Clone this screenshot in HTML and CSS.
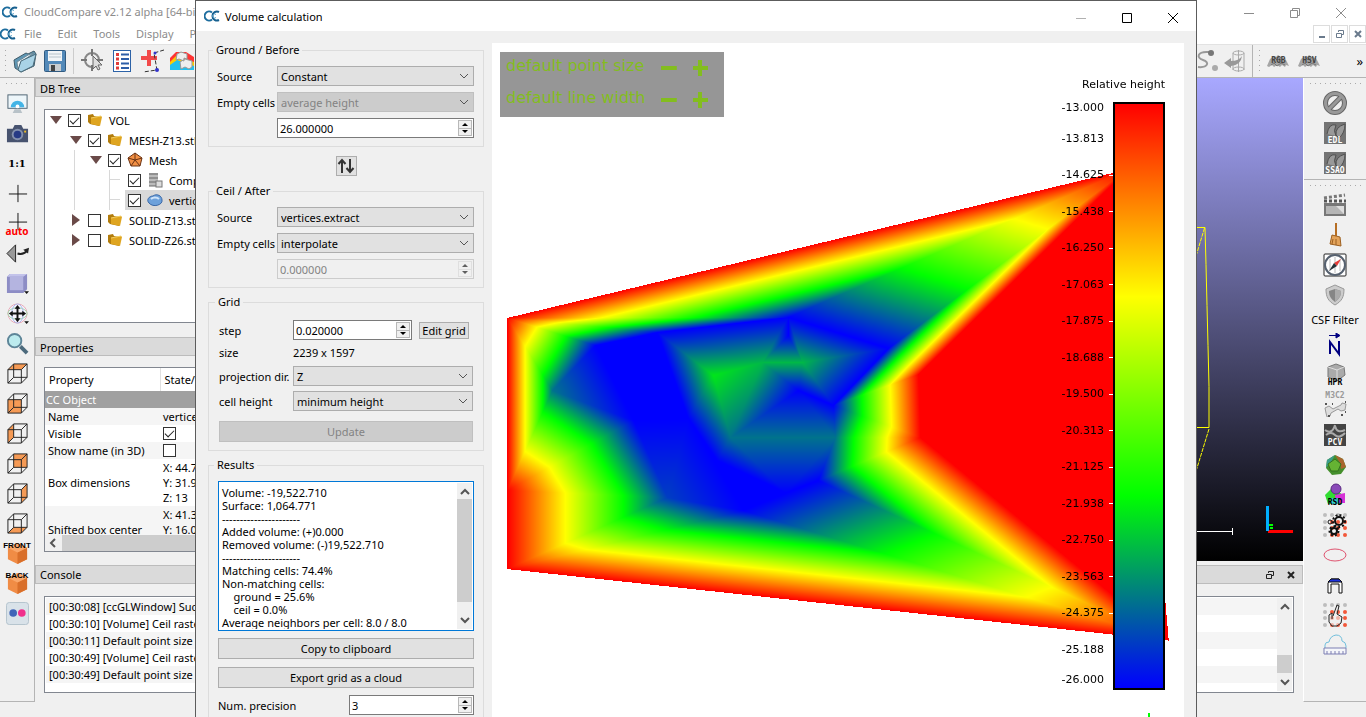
FILE: index.html
```html
<!DOCTYPE html>
<html lang="en">

<head>
    <meta charset="UTF-8">
    <meta name="viewport" content="width=device-width, initial-scale=1.0">
    <title>CloudCompare - Volume calculation</title>
    <link rel="stylesheet" href="styles.css">
</head>

<body>
    <!-- Shared icon shapes -->
    <svg class="sprite" aria-hidden="true">
        <symbol id="logo" viewBox="0 0 16 16">
            <path d="M8 4.500A4.500 4.500 0 1 0 8 11.500" fill="none" stroke="#1d6d9e" stroke-width="2" />
            <path d="M15 4A4.500 4.500 0 1 0 15 12" fill="none" stroke="#17608f" stroke-width="2" />
            <path d="M12 6.500A2 2 0 1 0 12 9.500" fill="none" stroke="#5da3c9" />
        </symbol>
        <symbol id="folder" viewBox="0 0 16 16">
            <path d="M1 3l5-1 1 2 5 1v9l-9-2-2-2z" fill="#b27c0c" />
            <path d="M4 6l10-2 1 1-2 9-9-2z" fill="#dfa520" />
            <path d="M4 6l10-2" stroke="#f4cf62" />
        </symbol>
        <symbol id="wire" viewBox="0 0 24 24">
            <path d="M2 8h14v14H2zM2 8l6-6h14v14l-6 6M16 8l6-6M8 2v14h14M8 16l-6 6" fill="none" stroke="#222" />
        </symbol>
        <symbol id="block" viewBox="0 0 24 24">
            <path d="M12 1l10 5v12l-10 5-10-5V6z" fill="#f08c45" />
            <path d="M12 11l10-5v12l-10 5z" fill="#d96f2a" />
            <path d="M12 1l10 5-10 5L2 6z" fill="#f9a86c" />
        </symbol>
        <symbol id="dots" viewBox="0 0 24 24">
            <g fill="#bdbdbd">
                <circle cx="2" cy="2" r="2" /><circle cx="9" cy="2" r="2" /><circle cx="15" cy="2" r="2" /><circle cx="22" cy="2" r="2" />
                <circle cx="2" cy="9" r="2" /><circle cx="2" cy="15" r="2" /><circle cx="2" cy="22" r="2" />
            </g>
            <g fill="#f2583a">
                <circle cx="9" cy="9" r="2" /><circle cx="15" cy="9" r="2" /><circle cx="22" cy="9" r="2" />
                <circle cx="9" cy="15" r="2" /><circle cx="15" cy="15" r="2" /><circle cx="22" cy="15" r="2" />
                <circle cx="9" cy="22" r="2" /><circle cx="15" cy="22" r="2" /><circle cx="22" cy="22" r="2" />
            </g>
        </symbol>
        <symbol id="sheep" viewBox="0 0 24 16">
            <path d="M1 13l3-7 4-3 2 1 2-2 3 2 4 1 4 8-3-1-1 2-3-2-2 2-3-2-3 2-2-2-3 2z" fill="#a5a5a5" />
            <path d="M8 4l3 3 5-3M5 12l3-2 3 3 4-3 4 2" stroke="#777" fill="none" />
        </symbol>
    </svg>

    <div class="main-window">
        <header class="title-bar">
            <svg class="logo"><use href="#logo" /></svg>
            <span class="title-text">CloudCompare v2.12 alpha [64-bit]</span>
            <div class="window-buttons">
                <button aria-label="Minimize"><svg viewBox="0 0 12 12"><path d="M1 6.500h10" /></svg></button>
                <button aria-label="Restore"><svg viewBox="0 0 12 12"><path d="M1.500 3.500h7v7h-7zM3.500 3.500v-2h7v7h-2" /></svg></button>
                <button aria-label="Close"><svg viewBox="0 0 12 12"><path d="M1 1l10 10M11 1L1 11" /></svg></button>
            </div>
        </header>

        <nav class="menu-bar">
            <svg class="logo"><use href="#logo" /></svg>
            <button>File</button>
            <button>Edit</button>
            <button>Tools</button>
            <button>Display</button>
            <button>Plugins</button>
            <div class="mdi-buttons">
                <button aria-label="Minimize view"><svg viewBox="0 0 10 10"><path d="M2 8h6" /></svg></button>
                <button aria-label="Restore view"><svg viewBox="0 0 10 10"><path d="M1.500 4.500h5v4h-5zM3.500 3V1.500h5v4H7" stroke-width="1" /></svg></button>
                <button aria-label="Close view"><svg viewBox="0 0 10 10"><path d="M2 2l6 6M8 2L2 8" /></svg></button>
            </div>
        </nav>

        <div class="toolbar">
            <div class="toolbar-group">
                <span class="grip"></span>
                <button class="tool" aria-label="Open"><svg viewBox="0 0 24 24"><path d="M1 11L13 4l2 1 6-3 2 3-2 12-13 6-6-4z" fill="#5f97b5" stroke="#3e5a68" /><path d="M4 13L15 6l6-2-13 9-3 8z" fill="#eef4f7" stroke="#6f8a97" /><path d="M5 21l3-9 15-7-3 12-12 6z" fill="#a9d3e6" stroke="#4b6b7a" /></svg></button>
                <button class="tool" aria-label="Save"><svg viewBox="0 0 24 24"><rect x="1.500" y="1.500" width="21" height="21" rx="1" fill="#5289b9" stroke="#315b81" /><rect x="5" y="2" width="14" height="10" fill="#f2f5f7" /><path d="M6 5h12M6 8h12" stroke="#b8c4cc" /><rect x="6" y="15" width="12" height="7" fill="#c9cdd0" /><rect x="8" y="16" width="4" height="6" fill="#444" /></svg></button>
                <span class="tool-separator"></span>
                <button class="tool" aria-label="Pick center"><svg viewBox="0 0 24 24"><circle cx="12" cy="11" r="7" fill="none" stroke="#888" stroke-width="2" /><path d="M12 0v7M12 16v6M1 11h6M17 11h6" stroke="#777" stroke-width="2" /><path d="M13 7v13l3-3 2 4 2-1-2-4h4z" fill="#ddd" stroke="#666" /></svg></button>
                <button class="tool" aria-label="Properties list"><svg viewBox="0 0 24 24"><rect x="3.500" y="1.500" width="17" height="21" fill="#fff" stroke="#2c62a7" stroke-width="1" /><path d="M11 5.500h8M11 10h8M11 14.500h8M11 19h8" stroke="#2d5ea8" stroke-width="2" /><path d="M6 5.500h3M6 10h3M6 14.500h3M6 19h3" stroke="#e03b3b" stroke-width="3" /></svg></button>
                <button class="tool" aria-label="Point picking"><svg viewBox="0 0 24 24"><path d="M9 1v16M1 9h16" stroke="#f24a4a" stroke-width="4" /><path d="M24 1l-10 3 3 17-14 2" fill="none" stroke="#333" stroke-dasharray="4 2" /><circle cx="15" cy="4" r="1.500" fill="#33c" /><circle cx="17" cy="21" r="2" fill="#33c" /></svg></button>
                <button class="tool" aria-label="Clone"><svg viewBox="0 0 24 24"><path d="M0 18V9l6-6h10l8 5v12H0z" fill="#f33" /><path d="M0 19v-6l6-6 18 6v6z" fill="#fc0" /><path d="M0 21v-5l7-5 17 6v4z" fill="#22c0ee" /><path d="M7 5l4-2 6 2v5l-3-1v3l-5-2-3 1zM10 13l5-3 7 2v6l-3 2-4-2-4 2z" fill="#eee" stroke="#999" /></svg></button>
            </div>
            <div class="toolbar-group toolbar-right">
                <button class="tool" aria-label="Trace polyline"><svg viewBox="0 0 24 24"><path d="M15 3C3 2 2 9 9 11s5 8-5 7" fill="none" stroke="#999" stroke-width="2" /><circle cx="17" cy="4" r="3" fill="#777" /><circle cx="21" cy="19" r="3" fill="#aaa" /></svg></button>
                <button class="tool" aria-label="Unroll"><svg viewBox="0 0 24 24"><path d="M10 4v17M21 4v17M15.500 1v22" stroke="#aaa" /><ellipse cx="15.500" cy="4" rx="5.500" ry="2" fill="none" stroke="#aaa" /><ellipse cx="15.500" cy="20" rx="5.500" ry="2" fill="none" stroke="#aaa" /><path d="M1 14l7-5v3q8 0 11-5-1 9-11 10v2z" fill="#999" /></svg></button>
                <span class="bar-edge"></span>
                <span class="grip"></span>
                <button class="tool sheep-tool">
                    <svg viewBox="0 0 24 16"><use href="#sheep" /></svg><span>RGB</span>
                </button>
                <button class="tool sheep-tool">
                    <svg viewBox="0 0 24 16"><use href="#sheep" /></svg><span>HSV</span>
                </button>
                <button class="more" aria-label="More tools">»</button>
            </div>
        </div>

        <div class="workspace">
            <aside class="side-bar side-left">
                <span class="grip grip-flat"></span>
                <button class="side-tool" aria-label="Display settings"><svg viewBox="0 0 24 24"><rect x="2" y="3" width="20" height="14" fill="#edf6fa" stroke="#4c6271" stroke-width="1" /><path d="M5 16a7 7 0 0 1 14 0z" fill="#43b4e6" /><circle cx="12" cy="15" r="2" fill="#fff" /><path d="M9 18h6l2 4H7z" fill="#b8c2c8" /></svg></button>
                <button class="side-tool" aria-label="Render to file"><svg viewBox="0 0 24 24"><path d="M1 7h6l2-4h7l2 4h5v14H1z" fill="#47536f" /><circle cx="12" cy="13" r="6" fill="#8390ad" /><circle cx="12" cy="13" r="4" fill="#263a85" /><rect x="19" y="9" width="2" height="2" fill="#f3bf27" /></svg></button>
                <button class="side-tool ratio">1:1</button>
                <button class="side-tool" aria-label="Pick rotation center"><svg viewBox="0 0 24 24"><path d="M12.500 3v18M3 12.500h19" stroke="#111" /></svg></button>
                <button class="side-tool auto-tool"><svg viewBox="0 0 24 24"><path d="M12.500 1v18M3 10.500h19" stroke="#111" /></svg><span>auto</span></button>
                <button class="side-tool" aria-label="Rotate"><svg viewBox="0 0 24 24"><path d="M10 3v18L1 12z" fill="#999" stroke="#222" /><path d="M12 12q6 2 10-3" fill="none" stroke="#222" stroke-width="2" /><path d="M18 8l6-2-1 6z" fill="#222" /></svg></button>
                <button class="side-tool" aria-label="Projection"><svg viewBox="0 0 24 24"><path d="M1 5l3-3h18v16l-4 4H1z" fill="#8d8dc5" /><path d="M1 5l3-3h18l-4 3z" fill="#c3c3ea" /><rect x="4" y="5" width="14" height="14" fill="#b4b4e0" /><path d="M19 20h5l-2.500 3z" fill="#111" /></svg></button>
                <button class="side-tool" aria-label="Pivot"><svg viewBox="0 0 24 24"><circle cx="12" cy="12" r="10" fill="#f5f2fb" stroke="#e8a9b5" /><ellipse cx="12" cy="12" rx="10" ry="6" fill="none" stroke="#9fd8a8" /><ellipse cx="12" cy="12" rx="6" ry="10" fill="none" stroke="#a8b8ec" /><path d="M12 6v12M6 12h12" stroke="#111" stroke-width="2" /><path d="M12 3l3 4H9zM12 21l3-4H9zM3 12l4-3v6zM21 12l-4-3v6zM19 20h5l-2.500 3z" fill="#111" /></svg></button>
                <button class="side-tool" aria-label="Zoom"><svg viewBox="0 0 24 24"><path d="M15 15l7 7" stroke="#4c6a7c" stroke-width="4" /><circle cx="9" cy="9" r="7" fill="#bcebee" stroke="#5d8598" stroke-width="2" /></svg></button>
                <button class="side-tool cube" aria-label="Top view"><svg viewBox="0 0 24 24"><path d="M2 8l6-6h14l-6 6z" fill="#f59a55" /><use href="#wire" /></svg></button>
                <button class="side-tool cube" aria-label="Front view"><svg viewBox="0 0 24 24"><path d="M2 8h14v14H2z" fill="#f59a55" /><use href="#wire" /></svg></button>
                <button class="side-tool cube" aria-label="Left view"><svg viewBox="0 0 24 24"><path d="M2 8l6-6v14l-6 6z" fill="#f59a55" /><use href="#wire" /></svg></button>
                <button class="side-tool cube" aria-label="Back side view"><svg viewBox="0 0 24 24"><path d="M8 2h14v14H8z" fill="#f59a55" /><use href="#wire" /></svg></button>
                <button class="side-tool cube" aria-label="Right view"><svg viewBox="0 0 24 24"><path d="M16 8l6-6v14l-6 6z" fill="#f59a55" /><use href="#wire" /></svg></button>
                <button class="side-tool cube" aria-label="Bottom view"><svg viewBox="0 0 24 24"><path d="M2 22l6-6h14l-6 6z" fill="#f59a55" /><use href="#wire" /></svg></button>
                <button class="side-tool block-tool"><svg viewBox="0 0 24 24"><use href="#block" /></svg><span>FRONT</span></button>
                <button class="side-tool block-tool"><svg viewBox="0 0 24 24"><use href="#block" /></svg><span>BACK</span></button>
                <button class="side-tool" aria-label="Stereo"><svg viewBox="0 0 24 24"><rect x="0.500" y="0.500" width="23" height="23" rx="3" fill="#d9e2e9" stroke="#b3c2cd" /><circle cx="7.500" cy="11.500" r="4" fill="#3f64b8" /><circle cx="16.500" cy="11.500" r="4" fill="#f0308c" /></svg></button>
            </aside>

            <div class="center">
                <div class="upper">
                    <div class="docks">
                        <h2 class="dock-title">DB Tree</h2>
                        <ul class="tree">
                            <li class="tree-row level-0"><span class="arrow open"></span><input type="checkbox" id="vol" checked><svg class="node-icon"><use href="#folder" /></svg><label for="vol">VOL</label></li>
                            <li class="tree-row level-1"><span class="arrow open"></span><input type="checkbox" id="mesh13" checked><svg class="node-icon"><use href="#folder" /></svg><label for="mesh13">MESH-Z13.stl</label></li>
                            <li class="tree-row level-2"><span class="arrow open"></span><input type="checkbox" id="mesh" checked><svg class="node-icon" viewBox="0 0 16 16"><path d="M8 1l7 5-2 8H4L1 6z" fill="#f29044" stroke="#693213" /><path d="M8 8V1M8 8l7-2M8 8l5 6M8 8l-4 6M8 8L1 6" stroke="#693213" /></svg><label for="mesh">Mesh</label></li>
                            <li class="tree-row level-3"><span class="arrow branch"></span><input type="checkbox" id="comp" checked><svg class="node-icon" viewBox="0 0 16 16"><path d="M2 1h9v13H2z" fill="#bbb" /><path d="M2 2h9M2 6h9M2 10h9M2 14h7" stroke="#666" /><rect x="9" y="9" width="6" height="6" fill="#ddd" stroke="#777" /></svg><label for="comp">Component</label></li>
                            <li class="tree-row level-3 selected"><span class="arrow branch"></span><input type="checkbox" id="vertices" checked><svg class="node-icon" viewBox="0 0 16 16"><path d="M2 11c-3-3 0-7 4-7 4-3 9 0 9 4 1 5-9 8-13 3z" fill="#6da1db" stroke="#3a67a5" /><path d="M4 7c2-2 6-2 8 0" stroke="#cfe4fa" fill="none" stroke-width="2" /></svg><label for="vertices">vertices</label></li>
                            <li class="tree-row level-1"><span class="arrow closed"></span><input type="checkbox" id="solid13"><svg class="node-icon"><use href="#folder" /></svg><label for="solid13">SOLID-Z13.stl</label></li>
                            <li class="tree-row level-1"><span class="arrow closed"></span><input type="checkbox" id="solid26"><svg class="node-icon"><use href="#folder" /></svg><label for="solid26">SOLID-Z26.stl</label></li>
                        </ul>
                        <h2 class="dock-title">Properties</h2>
                        <div class="properties">
                            <div class="properties-view">
                                <table>
                                    <thead>
                                        <tr><th>Property</th><th>State/Value</th></tr>
                                    </thead>
                                    <tbody>
                                        <tr class="section"><td colspan="2">CC Object</td></tr>
                                        <tr class="shade"><td>Name</td><td>vertices</td></tr>
                                        <tr><td><label for="visible">Visible</label></td><td><input type="checkbox" id="visible" checked></td></tr>
                                        <tr class="shade"><td><label for="showname">Show name (in 3D)</label></td><td><input type="checkbox" id="showname"></td></tr>
                                        <tr><td>Box dimensions</td><td>X: 44.7<br>Y: 31.9<br>Z: 13</td></tr>
                                        <tr class="shade"><td>Shifted box center</td><td>X: 41.3<br>Y: 16.0<br>Z: -6.5</td></tr>
                                    </tbody>
                                </table>
                            </div>
                            <div class="scroll-h"><svg viewBox="0 0 10 10"><path d="M7 1L3 5l4 4" /></svg></div>
                        </div>
                    </div>
                    <div class="view-3d">
                        <svg class="scene" viewBox="0 0 110 483">
                            <g fill="none" stroke="#ff0">
                                <path d="M0 149.500h12l1 37 1 41 1 40 1 41v41H0" />
                                <path d="M11.500 150L0 188M16 351L0 403" stroke-dasharray="4 1" />
                            </g>
                            <path d="M0 453.500h39M39.500 450v7" stroke="#fff" fill="none" />
                            <path d="M76 447h4M77 450h3" stroke="#0f0" stroke-width="2" />
                            <path d="M75 453.500h25" stroke="#f00" stroke-width="3" />
                            <path d="M74.500 428v25" stroke="#00aeff" stroke-width="3" />
                        </svg>
                    </div>
                </div>

                <div class="dock-title console-title">
                    <h2>Console</h2>
                    <div class="dock-buttons">
                        <button aria-label="Float console"><svg viewBox="0 0 10 10"><path d="M1.500 4.500h5v4h-5zM3.500 3V1.500h5v4H7" /></svg></button>
                        <button aria-label="Close console"><svg viewBox="0 0 10 10"><path d="M2 2l6 6M8 2L2 8" stroke-width="2" /></svg></button>
                    </div>
                </div>
                <div class="console">
                    <ul class="log">
                        <li>[00:30:08] [ccGLWindow] Successfully initialized</li>
                        <li>[00:30:10] [Volume] Ceil raster grid</li>
                        <li>[00:30:11] Default point size</li>
                        <li>[00:30:49] [Volume] Ceil raster grid</li>
                        <li>[00:30:49] Default point size</li>
                    </ul>
                    <div class="scroll-v low">
                        <svg viewBox="0 0 10 10"><path d="M1 7l4-4 4 4" /></svg>
                        <span class="thumb"></span>
                        <svg viewBox="0 0 10 10"><path d="M1 3l4 4 4-4" /></svg>
                    </div>
                </div>
            </div>

            <aside class="side-bar side-right">
                <div class="side-group">
                    <span class="grip grip-flat"></span>
                    <button class="side-tool" aria-label="Remove filter"><svg viewBox="0 0 24 24"><circle cx="12" cy="12" r="9.500" fill="none" stroke="#666" stroke-width="5" /><path d="M6 18L18 6" stroke="#666" stroke-width="5" /><circle cx="12" cy="12" r="9.500" fill="none" stroke="#999" stroke-width="3" /><path d="M6 18L18 6" stroke="#999" stroke-width="3" /></svg></button>
                    <button class="side-tool tag-tool light"><svg viewBox="0 0 24 24"><rect x="1" y="1" width="22" height="22" fill="#747474" /><path d="M4 13q2-11 9-9-3 6 0 11M13 14q-1-8 9-11 0 9-6 14z" fill="#999" stroke="#505050" /></svg><span>EDL</span></button>
                    <button class="side-tool tag-tool light"><svg viewBox="0 0 24 24"><rect x="1" y="1" width="22" height="22" fill="#747474" /><path d="M4 13q2-11 9-9-3 6 0 11M13 14q-1-8 9-11 0 9-6 14z" fill="#999" stroke="#505050" /></svg><span>SSAO</span></button>
                </div>
                <div class="side-group">
                    <span class="grip grip-flat"></span>
                    <button class="side-tool" aria-label="Animation"><svg viewBox="0 0 24 24"><rect x="1" y="10" width="22" height="13" fill="#777" /><path d="M3 13h18v8H3z" fill="#b5b5b5" /><path d="M13 13h8v8z" fill="#dedede" /><path d="M1 8h22" stroke="#555" stroke-width="3" stroke-dasharray="3 2" /><path d="M1 5l21-3" stroke="#777" stroke-width="3" stroke-dasharray="3 2" /></svg></button>
                    <button class="side-tool" aria-label="Broom"><svg viewBox="0 0 24 24"><path d="M12 0h2v13h-2z" fill="#b66e24" /><path d="M9 12l8 2 1 9-11-2z" fill="#e3a35a" stroke="#9d6021" /><path d="M10 16l-1 5M13 16v6" stroke="#9d6021" /></svg></button>
                    <button class="side-tool" aria-label="Compass"><svg viewBox="0 0 24 24"><rect x="1" y="1" width="22" height="22" rx="1" fill="#fff" stroke="#222" /><circle cx="12" cy="12" r="10" fill="#fff" stroke="#56616f" stroke-width="2" /><path d="M7 6v12M12 4v16M17 6v12" stroke="#bbb" /><path d="M18 6l-4 7-3-3z" fill="#e63d39" /><path d="M6 18l5-8 3 3z" fill="#263238" /></svg></button>
                    <button class="side-tool" aria-label="CSF"><svg viewBox="0 0 24 24"><path d="M12 2l9 4c0 8-2 12-9 16C5 18 3 14 3 6z" fill="#ccc" stroke="#999" /><path d="M12 6l6 2c0 5-2 8-6 11-4-3-6-6-6-11z" fill="#858585" /><path d="M12 6l6 2c0 5-2 8-6 11z" fill="#aaa" /></svg></button>
                    <span class="side-label">CSF Filter</span>
                    <button class="side-tool" aria-label="Normals"><svg viewBox="0 0 24 24"><path d="M6 2.500h9M13 0l4 2.500L13 5z" stroke="#000080" fill="#000080" /><path d="M7 21V9l9 12V8" fill="none" stroke="#000080" stroke-width="2" /></svg></button>
                    <button class="side-tool tag-tool"><svg viewBox="0 0 24 24"><path d="M5 4l8-3 8 3 1 8-8 6-9-4z" fill="#aaa" stroke="#777" /><path d="M5 4l9 3 7-3M14 7v10" stroke="#ddd" fill="none" /></svg><span>HPR</span></button>
                    <button class="side-tool tag-tool pale"><svg viewBox="0 0 24 24"><path d="M3 20l-1-5 4-2 4 3 8-4 1-2 4 1-1 6-4 1-3-2-7 4-1 3-3 1z" fill="#ddd" stroke="#999" /><path d="M2 11h2M18 22h2M5 23h2M22 19h1M9 11h1M22 9h1" stroke="#555" stroke-width="2" /></svg><span>M3C2</span></button>
                    <button class="side-tool tag-tool light"><svg viewBox="0 0 24 24"><rect x="1" y="1" width="22" height="22" fill="#444" /><path d="M2 7q7 5 10-5M12 3q2 8 10 4M3 12q5-4 9 0t10-2" stroke="#aaa" stroke-width="2" fill="none" /></svg><span>PCV</span></button>
                    <button class="side-tool" aria-label="Poisson"><svg viewBox="0 0 24 24"><path d="M12 2l8 4 3 8-5 7-9 1-6-7 1-8z" fill="#458f2c" /><path d="M12 2l8 4 3 8-5 2-1-6z" fill="#a9652e" /><path d="M12 2L4 7l-1 8 5-6z" fill="#3b9c89" /><path d="M12 6l6 5-3 7H8l-3-7z" fill="#65b333" stroke="#35721f" /></svg></button>
                    <button class="side-tool tag-tool"><svg viewBox="0 0 24 24"><path d="M2 12l8-8 11 9-2 8H5z" fill="#31dc31" /><path d="M12 12l10-2v10h-9z" fill="#d633d6" /><path d="M8 15h8v6H8z" fill="#3cc" /><circle cx="13" cy="6" r="5" fill="#8a4ab8" stroke="#5c2a83" /></svg><span>RSD</span></button>
                    <button class="side-tool" aria-label="Gears"><svg viewBox="0 0 24 24"><use href="#dots" /><g fill="none" stroke="#111"><circle cx="16" cy="8" r="4" stroke-width="2" /><circle cx="16" cy="8" r="6" stroke-width="2" stroke-dasharray="2 2" /><circle cx="11" cy="18" r="3" stroke-width="2" /><circle cx="11" cy="18" r="4.500" stroke-width="2" stroke-dasharray="2 2" /><circle cx="7" cy="9" r="2" /></g></svg></button>
                    <button class="side-tool" aria-label="Ellipse"><svg viewBox="0 0 24 24"><ellipse cx="12" cy="12" rx="11" ry="6" fill="none" stroke="#df5570" /></svg></button>
                    <button class="side-tool" aria-label="Section"><svg viewBox="0 0 24 24"><path d="M5 20V10l3-4h8l3 4v10h-3v-9H8v9z" fill="#fff" stroke="#111" /><path d="M8 6h8l3 3H5z" fill="#1d32dc" stroke="#111" /></svg></button>
                    <button class="side-tool" aria-label="Hand pick"><svg viewBox="0 0 24 24"><use href="#dots" /><path d="M10 13L14 2l2 1-2 8 5 3-1 6-4 3H9l-3-4V12l3-2v6" fill="#eee" fill-opacity=".6" stroke="#222" /></svg></button>
                    <button class="side-tool" aria-label="Cloud measure"><svg viewBox="0 0 24 24"><path d="M2 15v-3q0-3 4-3 1-6 7-7 6 0 6 6 4 1 4 5v2" fill="none" stroke="#71bfdc" /><path d="M1 15h22v6H1zM4 18v3M8 18v3M12 18v3M16 18v3M20 18v3" fill="#f5f6fa" stroke="#7c7eb3" /></svg></button>
                </div>
            </aside>
        </div>
    </div>

    <section class="dialog" role="dialog" aria-label="Volume calculation">
        <header class="dialog-title">
            <svg class="logo"><use href="#logo" /></svg>
            <h1>Volume calculation</h1>
            <div class="window-buttons dark">
                <button class="off" aria-label="Minimize dialog"><svg viewBox="0 0 12 12"><path d="M1 6.500h10" /></svg></button>
                <button aria-label="Maximize dialog"><svg viewBox="0 0 12 12"><path d="M1.500 1.500h9v9h-9z" /></svg></button>
                <button aria-label="Close dialog"><svg viewBox="0 0 12 12"><path d="M1 1l10 10M11 1L1 11" /></svg></button>
            </div>
        </header>

        <div class="dialog-body">
            <form class="settings">
                <fieldset>
                    <legend>Ground / Before</legend>
                    <div class="fields">
                        <label for="groundSource">Source</label>
                        <select id="groundSource"><option>Constant</option></select>
                        <label for="groundEmpty">Empty cells</label>
                        <select id="groundEmpty" disabled><option>average height</option></select>
                        <div class="spin last-col">
                            <input type="text" id="groundValue" aria-label="Ground value" value="26.000000">
                            <span class="spin-arrows"><button type="button" aria-label="Up"></button><button type="button" aria-label="Down"></button></span>
                        </div>
                    </div>
                </fieldset>

                <button type="button" class="swap" aria-label="Swap ground and ceil"><svg viewBox="0 0 18 18"><path d="M5 16V4M13 2v12" /><path d="M1.500 7L5 3l3.500 4M9.500 11l3.500 4 3.500-4" /></svg></button>

                <fieldset>
                    <legend>Ceil / After</legend>
                    <div class="fields">
                        <label for="ceilSource">Source</label>
                        <select id="ceilSource"><option>vertices.extract</option></select>
                        <label for="ceilEmpty">Empty cells</label>
                        <select id="ceilEmpty"><option>interpolate</option></select>
                        <div class="spin last-col disabled">
                            <input type="text" id="ceilValue" aria-label="Ceil value" value="0.000000" disabled>
                            <span class="spin-arrows"><button type="button" aria-label="Up" disabled></button><button type="button" aria-label="Down" disabled></button></span>
                        </div>
                    </div>
                </fieldset>

                <fieldset class="grid-box">
                    <legend>Grid</legend>
                    <div class="fields grid-fields">
                        <label for="step">step</label>
                        <div class="step-row">
                            <div class="spin">
                                <input type="text" id="step" value="0.020000">
                                <span class="spin-arrows"><button type="button" aria-label="Up"></button><button type="button" aria-label="Down"></button></span>
                            </div>
                            <button type="button" class="push small">Edit grid</button>
                        </div>
                        <span class="size-label">size</span>
                        <span class="size-label">2239 x 1597</span>
                        <label for="projection">projection dir.</label>
                        <select id="projection"><option>Z</option></select>
                        <label for="cellHeight">cell height</label>
                        <select id="cellHeight"><option>minimum height</option></select>
                    </div>
                    <button type="button" class="push" disabled>Update</button>
                </fieldset>

                <fieldset class="results-box">
                    <legend>Results</legend>
                    <div class="report">
                        <textarea id="report" aria-label="Results" readonly>Volume: -19,522.710
Surface: 1,064.771
----------------------
Added volume: (+)0.000
Removed volume: (-)19,522.710
----------------------
Matching cells: 74.4%
Non-matching cells:
    ground = 25.6%
    ceil = 0.0%
Average neighbors per cell: 8.0 / 8.0</textarea>
                        <div class="scroll-v">
                            <svg viewBox="0 0 10 10"><path d="M1 7l4-4 4 4" /></svg>
                            <span class="thumb"></span>
                            <svg viewBox="0 0 10 10"><path d="M1 3l4 4 4-4" /></svg>
                        </div>
                    </div>
                    <button type="button" class="push">Copy to clipboard</button>
                    <button type="button" class="push">Export grid as a cloud</button>
                    <div class="precision-row">
                        <label for="precision">Num. precision</label>
                        <div class="spin">
                            <input type="text" id="precision" value="3">
                            <span class="spin-arrows"><button type="button" aria-label="Up"></button><button type="button" aria-label="Down"></button></span>
                        </div>
                    </div>
                </fieldset>
            </form>

            <div class="viewer">
                <canvas id="raster" width="692" height="674"></canvas>
                <div class="hot-zone">
                    <div class="hot-row"><span>default point size</span><button aria-label="Smaller points" class="minus"></button><button aria-label="Larger points" class="plus"></button></div>
                    <div class="hot-row"><span>default line width</span><button aria-label="Thinner lines" class="minus"></button><button aria-label="Thicker lines" class="plus"></button></div>
                </div>
                <div class="color-scale">
                    <div class="scale-title">Relative height</div>
                    <div class="scale-body">
                        <ul class="scale-labels">
                            <li>-13.000</li>
                            <li>-13.813</li>
                            <li>-14.625</li>
                            <li>-15.438</li>
                            <li>-16.250</li>
                            <li>-17.063</li>
                            <li>-17.875</li>
                            <li>-18.688</li>
                            <li>-19.500</li>
                            <li>-20.313</li>
                            <li>-21.125</li>
                            <li>-21.938</li>
                            <li>-22.750</li>
                            <li>-23.563</li>
                            <li>-24.375</li>
                            <li>-25.188</li>
                            <li>-26.000</li>
                        </ul>
                        <div class="ramp"></div>
                    </div>
                </div>
            </div>
        </div>
    </section>

    <script src="raster.js"></script>
</body>

</html>
```
FILE: styles.css
```css
* {
    box-sizing: border-box;
}

body {
    margin: 0;
    height: 100vh;
    overflow: hidden;
    position: relative;
    background-color: #f0f0f0;
    font-family: "Noto Sans", sans-serif;
    font-size: 11px;
    color: #000;
}

button,
input,
select,
textarea {
    font: inherit;
    color: inherit;
    margin: 0;
}

button {
    padding: 0;
    border: none;
    background: none;
}

h1,
h2 {
    margin: 0;
    font-size: inherit;
    font-weight: normal;
}

ul {
    margin: 0;
    padding: 0;
    list-style: none;
}

.sprite {
    display: none;
}

.logo {
    width: 16px;
    height: 16px;
    flex: none;
}

/* Main window */
.main-window {
    height: 100vh;
    display: flex;
    flex-direction: column;
}

.title-bar,
.menu-bar {
    display: flex;
    align-items: center;
    background-color: #fff;
    color: #8c8c8c;
}

.title-bar {
    height: 23px;
    padding-left: 2px;
    padding-right: 2px;
    gap: 6px;
}

.menu-bar {
    height: 21px;
}

.menu-bar > button {
    margin-left: 8px;
    margin-right: 8px;
}

.window-buttons,
.mdi-buttons {
    display: flex;
    margin-left: auto;
}

.window-buttons button {
    width: 46px;
    height: 20px;
}

.window-buttons svg {
    width: 12px;
    height: 12px;
    fill: none;
    stroke: #8c8c8c;
    vertical-align: middle;
}

.window-buttons.dark svg {
    stroke: #000;
}

.window-buttons.dark .off svg {
    stroke: #b0b0b0;
}

.mdi-buttons {
    gap: 1px;
}

.mdi-buttons button {
    width: 17px;
    height: 18px;
    border: 1px solid #ddd;
}

.mdi-buttons svg {
    width: 10px;
    height: 10px;
    display: block;
    margin: auto;
    fill: none;
    stroke: #6a7a8c;
    stroke-width: 2;
}

.toolbar {
    height: 34px;
    display: flex;
    justify-content: space-between;
    border-top: 1px solid #e2e2e2;
    border-bottom: 1px solid #b4b4b4;
}

.toolbar-group {
    display: flex;
    align-items: center;
    gap: 6px;
    padding-left: 4px;
}

.toolbar-right {
    gap: 5px;
    padding-right: 3px;
}

.grip {
    width: 3px;
    height: 26px;
    background: radial-gradient(circle, #aaa 1px, transparent 1px) 0 0 / 3px 5px;
}

.grip-flat {
    width: auto;
    height: 3px;
    margin: 4px 4px 3px;
    background-size: 5px 3px;
}

.tool,
.tool svg {
    width: 24px;
    height: 24px;
    display: block;
}

.tool-separator {
    width: 1px;
    height: 26px;
    background-color: #ccc;
}

.bar-edge {
    width: 1px;
    height: 32px;
    background-color: #b4b4b4;
}

.sheep-tool {
    position: relative;
    margin-right: 2px;
}

.sheep-tool span {
    position: absolute;
    left: 0;
    right: 0;
    top: 7px;
    font: bold 8px "DejaVu Sans Mono", monospace;
    color: #444;
}

.more {
    margin-left: 28px;
    font-size: 13px;
}

.workspace {
    flex: 1;
    display: flex;
    min-height: 0;
}

/* Vertical tool bars */
.side-bar {
    flex: none;
    margin-bottom: 15px;
    border-bottom: 1px solid #b4b4b4;
    display: flex;
    flex-direction: column;
}

.side-left {
    width: 35px;
    border-right: 1px solid #b4b4b4;
}

.side-right {
    width: 63px;
    border-left: 1px solid #fff;
}

.side-group {
    display: flex;
    flex-direction: column;
}

.side-group + .side-group {
    margin-top: 1px;
    border-top: 1px solid #b4b4b4;
}

.side-tool {
    height: 30px;
    position: relative;
    display: flex;
    align-items: center;
    justify-content: center;
}

.side-tool svg {
    width: 24px;
    height: 24px;
}

.side-left .side-tool svg {
    width: 23px;
    height: 23px;
}

.side-label {
    height: 20px;
    line-height: 20px;
    text-align: center;
}

.ratio {
    font: bold 10px "DejaVu Serif", serif;
}

.auto-tool span {
    position: absolute;
    bottom: 1px;
    font-size: 10px;
    font-weight: bold;
    line-height: 12px;
    color: #f00;
}

.block-tool span {
    position: absolute;
    top: 3px;
    font: bold 8px "Liberation Sans", sans-serif;
}

.tag-tool span {
    position: absolute;
    bottom: 3px;
    font: bold 8px "DejaVu Sans Mono", monospace;
}

.tag-tool.light span {
    color: #fff;
}

.tag-tool.pale span {
    bottom: auto;
    top: 1px;
    color: #999;
}

/* Docks */
.center {
    flex: 1;
    min-width: 0;
    display: flex;
    flex-direction: column;
}

.upper {
    flex: 1;
    min-height: 0;
    display: flex;
}

.docks {
    width: 300px;
    display: flex;
    flex-direction: column;
}

.dock-title {
    flex: none;
    height: 19px;
    padding-left: 4px;
    line-height: 20px;
    border: 1px solid #bcbcbc;
    background-color: #dadada;
}

.tree,
.properties,
.console {
    margin-left: 9px;
    border: 1px solid #828790;
    background-color: #fff;
}

.tree {
    height: 214px;
    margin-top: 12px;
    margin-bottom: 14px;
}

.tree-row {
    height: 20px;
    display: flex;
    align-items: center;
    gap: 6px;
    padding-left: 4px;
}

.level-1 {
    margin-left: 20px;
}

.level-2 {
    margin-left: 40px;
}

.level-3 {
    margin-left: 60px;
}

.level-2,
.level-3 {
    position: relative;
}

/* Guide line under the MESH node */
.level-2::before,
.level-3::before {
    content: "";
    position: absolute;
    left: -11px;
    top: 0;
    height: 20px;
    border-left: 1px solid #d8d8d8;
}

.level-3::before {
    left: -31px;
}

.tree-row.selected {
    background: linear-gradient(#d9d9d9, #d9d9d9) 20px 0 no-repeat;
}

.arrow {
    width: 13px;
    height: 20px;
    display: flex;
    align-items: center;
    justify-content: center;
}

.arrow.open::after {
    content: "";
    border: 6px solid transparent;
    border-top: 8px solid #6a4a48;
    border-bottom: none;
}

.arrow.closed::after {
    content: "";
    border: 6px solid transparent;
    border-left: 8px solid #6a4a48;
    border-right: none;
}

.arrow.branch {
    justify-content: flex-end;
    border-left: 1px solid #d8d8d8;
    background: linear-gradient(#d8d8d8, #d8d8d8) 0 9px / 10px 1px no-repeat;
}

.node-icon {
    width: 16px;
    height: 16px;
}

input[type="checkbox"] {
    appearance: none;
    flex: none;
    display: block;
    width: 13px;
    height: 13px;
    border: 1px solid #333;
    background-color: #fff;
}

input[type="checkbox"]:checked::after {
    content: "";
    display: block;
    width: 8px;
    height: 4px;
    margin: 2px 1px;
    border-left: 1px solid #222;
    border-bottom: 1px solid #222;
    transform: rotate(-45deg);
}

.properties {
    height: 185px;
    margin-top: 11px;
    display: flex;
    flex-direction: column;
}

.properties-view {
    flex: 1;
    min-height: 0;
    overflow: hidden;
}

.properties table {
    width: 100%;
    border-collapse: collapse;
    table-layout: fixed;
}

.properties th {
    width: 115px;
    height: 23px;
    padding: 0 4px;
    font-weight: normal;
    text-align: left;
    border-right: 1px solid #e0e0e0;
}

.properties th:last-child {
    width: auto;
}

.properties td {
    height: 17px;
    padding: 1px 3px;
    line-height: 15px;
}

.properties .section {
    background-color: #a0a0a0;
    color: #fff;
}

.properties .section td {
    padding: 1px;
}

.shade {
    background-color: #f5f5f5;
}

.scroll-h {
    height: 16px;
    background: linear-gradient(#cdcdcd, #cdcdcd) 17px 0 no-repeat #f0f0f0;
    display: flex;
    align-items: center;
    padding-left: 3px;
}

.scroll-h svg,
.scroll-v svg {
    width: 10px;
    height: 10px;
    flex: none;
    fill: none;
    stroke: #555;
    stroke-width: 2;
}

.view-3d {
    flex: 1;
    display: flex;
    justify-content: flex-end;
    background: linear-gradient(#a8a8ff, #000);
}

.scene {
    width: 110px;
    height: 483px;
}

.console-title {
    display: flex;
    align-items: center;
    margin-top: 4px;
}

.dock-buttons {
    display: flex;
    gap: 11px;
    margin-left: auto;
    padding-right: 6px;
}

.dock-buttons svg {
    width: 10px;
    height: 10px;
    display: block;
    fill: none;
    stroke: #222;
}

.console {
    flex: none;
    display: flex;
    height: 97px;
    margin: 12px 9px 24px;
    padding: 1px;
}

.log {
    flex: 1;
    background: repeating-linear-gradient(#f5f5f5 0 17px, #fff 17px 34px);
}

.log li {
    height: 17px;
    line-height: 18px;
    padding-left: 3px;
}

.scroll-v {
    width: 15px;
    flex: none;
    display: flex;
    flex-direction: column;
    align-items: center;
    justify-content: space-between;
    padding: 4px 0;
    background-color: #f0f0f0;
}

.scroll-v .thumb {
    width: 15px;
    height: 103px;
    margin-bottom: 12px;
    background-color: #cdcdcd;
}

.scroll-v.low .thumb {
    height: 18px;
    margin-top: auto;
    margin-bottom: 4px;
}

/* Volume dialog */
.dialog {
    position: absolute;
    top: 0;
    bottom: 0;
    left: 195px;
    right: 169px;
    display: flex;
    flex-direction: column;
    background-color: #f0f0f0;
    border: 1px solid #5c5c5c;
    border-bottom: none;
    overflow: hidden;
}

.dialog-title {
    flex: none;
    height: 30px;
    display: flex;
    align-items: center;
    gap: 5px;
    padding-left: 8px;
    background-color: #fff;
}

.dialog-body {
    flex: 1;
    min-height: 0;
    display: flex;
    gap: 8px;
    padding: 12px 12px 0;
}

.settings {
    flex: none;
    width: 276px;
    display: flex;
    flex-direction: column;
}

fieldset {
    min-width: 0;
    margin: 0;
    padding: 9px 9px 8px 8px;
    border: 1px solid #dcdcdc;
}

legend {
    padding: 0 3px;
    margin-left: -4px;
    line-height: 14px;
}

.fields {
    display: grid;
    grid-template-columns: 60px 1fr;
    row-gap: 6px;
    align-items: center;
}

.last-col {
    grid-column: 2;
}

select {
    appearance: none;
    width: 100%;
    height: 20px;
    padding: 0 20px 0 3px;
    border: 1px solid #adadad;
    border-radius: 0;
    background: url("data:image/svg+xml,%3Csvg xmlns='http://www.w3.org/2000/svg' width='10' height='6'%3E%3Cpath d='M1 1l4 4 4-4' fill='none' stroke='%23555'/%3E%3C/svg%3E") right 4px center no-repeat #e1e1e1;
}

select:disabled {
    background-color: #ccc;
    border-color: #bfbfbf;
    color: #838383;
    opacity: 1;
}

.spin {
    height: 20px;
    display: flex;
    padding: 1px;
    border: 1px solid #7a7a7a;
    background-color: #fff;
}

.spin input {
    flex: 1;
    min-width: 0;
    width: 0;
    padding: 0 1px;
    border: none;
    background: none;
}

.spin.disabled {
    border-color: #ccc;
    background-color: #f0f0f0;
    color: #838383;
}

.spin-arrows {
    width: 14px;
    display: flex;
    flex-direction: column;
}

.spin-arrows button {
    flex: 1;
    display: flex;
    align-items: center;
    justify-content: center;
    border: 1px solid #b8b8b8;
    background-color: #f0f0f0;
}

.spin-arrows button::after {
    content: "";
    border: 3px solid transparent;
    border-bottom-color: #000;
    border-top: none;
}

.spin-arrows button:last-child {
    border-top: none;
}

.spin-arrows button:last-child::after {
    border: 3px solid transparent;
    border-top-color: #000;
    border-bottom: none;
}

.disabled .spin-arrows button {
    border-color: #d5d5d5;
    opacity: .6;
}

.swap {
    align-self: center;
    width: 21px;
    height: 20px;
    margin: 9px 0 8px;
    border: 1px solid #adadad;
    background-color: #e1e1e1;
}

.swap svg {
    width: 18px;
    height: 18px;
    display: block;
    fill: none;
    stroke: #333;
    stroke-width: 2;
}

.grid-box {
    margin-top: 7px;
    padding: 11px 10px 8px;
}

.grid-fields {
    grid-template-columns: 74px 1fr;
    row-gap: 5px;
    margin-bottom: 10px;
}

.step-row {
    display: flex;
    align-items: center;
    gap: 7px;
}

.step-row .spin {
    width: 119px;
}

.size-label {
    line-height: 16px;
}

.push {
    display: block;
    width: 100%;
    height: 21px;
    border: 1px solid #adadad;
    background-color: #e1e1e1;
}

.push.small {
    width: 50px;
    height: 17px;
    line-height: 15px;
}

.push:disabled {
    border-color: #bfbfbf;
    background-color: #ccc;
    color: #838383;
}

.results-box {
    margin-top: 7px;
    padding: 9px 9px 20px;
}

.report {
    display: flex;
    height: 150px;
    padding: 1px;
    border: 1px solid #0078d7;
    background-color: #fff;
}

.report textarea {
    flex: 1;
    min-width: 0;
    padding: 3px 2px 0;
    border: none;
    resize: none;
    overflow: hidden;
    outline: none;
    line-height: 13px;
    white-space: pre;
}

.results-box .push {
    margin-top: 7px;
}

.results-box .push + .push {
    margin-top: 8px;
}

.precision-row {
    display: flex;
    align-items: center;
    justify-content: space-between;
    margin-top: 7px;
}

.precision-row .spin {
    width: 125px;
}

/* Raster viewer */
.viewer {
    flex: 1;
    min-width: 0;
    position: relative;
    background-color: #fff;
    overflow: hidden;
    font-family: "DejaVu Sans", sans-serif;
}

#raster {
    display: block;
}

.hot-zone {
    position: absolute;
    left: 8px;
    top: 9px;
    width: 224px;
    height: 65px;
    padding-left: 6px;
    background-color: #969696;
    color: #83bd1e;
    font-size: 16px;
}

.hot-row {
    display: flex;
    align-items: center;
    height: 32px;
}

.hot-row span {
    width: 160px;
    padding-bottom: 4px;
    line-height: 20px;
}

.hot-row button {
    width: 16px;
    height: 16px;
    margin-right: 16px;
    background: linear-gradient(#83bd1e, #83bd1e) center / 16px 4px no-repeat;
}

.hot-row .plus {
    background: linear-gradient(#83bd1e, #83bd1e) center / 16px 4px no-repeat, linear-gradient(#83bd1e, #83bd1e) center / 4px 16px no-repeat;
}

.color-scale {
    position: absolute;
    top: 34px;
    right: 19px;
}

.scale-title {
    height: 25px;
    line-height: 15px;
    text-align: right;
}

.scale-body {
    display: flex;
    justify-content: flex-end;
    height: 588px;
}

.ramp {
    width: 52px;
    border: 2px solid #000;
    background: linear-gradient(#f00, #ff0 33%, #0f0 67%, #00f);
}

.scale-labels {
    display: flex;
    flex-direction: column;
    height: 584px;
}

.scale-labels li {
    flex: 2;
    min-height: 0;
    display: flex;
    align-items: center;
    line-height: 12px;
}

.scale-labels li::after {
    content: "";
    width: 4px;
    height: 1px;
    margin-left: 5px;
    background-color: #fff;
}

.scale-labels li:first-child {
    flex: 1;
    align-items: flex-start;
}

.scale-labels li:last-child {
    flex: 1;
    align-items: flex-end;
}
```
FILE: raster.js
```javascript
// Points of the height surface: x, y, relative height (0 = lowest, 1 = highest)
const points = {
    a: [15, 274.5, 1], b: [635, 126, 1], c: [676, 597, 1], d: [15, 525.5, 1], z: [15, 447, 1],
    e: [103, 302, 0], f: [165, 289, 0], g: [296, 274, 0], h: [396, 305, 0], i: [341, 362, 0],
    j: [326, 437, 0], k: [293, 449, 0], l: [251, 467, 0], m: [225, 417, 0], n: [196, 375, 0],
    o: [141, 377, 0], p: [175, 454, 0.08], q: [60, 347, 0.15], r: [221, 332, 0.3],
    s: [310, 319, 0.24], t: [270, 319, 0.24], u: [238, 394, 0.15], v: [343, 394, 0.15],
    w: [306, 347, 0], y: [296, 292, 0], R: [426, 331, 1], S: [428, 394, 1]
};

const triangles = 'abg agf afe aeq aqz qzo qoe ozp zpd pdl ldc lcj jkl jcS Scb RSb hRb ghb ' +
    'ihR iRS ivS vjS efn eno onp npl nml mkl frn run umn umk uvk vjk ftr fgt gty gys yts ' +
    'rtu twu uwv wiv tsw swi shi sgh';

const canvas = document.getElementById('raster');
const ctx = canvas.getContext('2d');
const image = ctx.createImageData(canvas.width, canvas.height);

// Blue - green - yellow - red ramp
function ramp(t) {
    const v = Math.max(0, Math.min(1, t)) * 3;
    if (v < 1) return [0, 255 * v, 255 * (1 - v)];
    if (v < 2) return [255 * (v - 1), 255, 0];
    return [255, 255 * (3 - v), 0];
}

function fillTriangle(p, q, r) {
    const det = (q[1] - r[1]) * (p[0] - r[0]) + (r[0] - q[0]) * (p[1] - r[1]);
    const minX = Math.floor(Math.min(p[0], q[0], r[0]));
    const maxX = Math.ceil(Math.max(p[0], q[0], r[0]));
    const minY = Math.floor(Math.min(p[1], q[1], r[1]));
    const maxY = Math.ceil(Math.max(p[1], q[1], r[1]));
    for (let y = minY; y <= maxY; y++) {
        for (let x = minX; x <= maxX; x++) {
            const a = ((q[1] - r[1]) * (x - r[0]) + (r[0] - q[0]) * (y - r[1])) / det;
            const b = ((r[1] - p[1]) * (x - r[0]) + (p[0] - r[0]) * (y - r[1])) / det;
            const c = 1 - a - b;
            if (a < -0.001 || b < -0.001 || c < -0.001) continue;
            const color = ramp(a * p[2] + b * q[2] + c * r[2]);
            const k = (y * canvas.width + x) * 4;
            image.data[k] = color[0];
            image.data[k + 1] = color[1];
            image.data[k + 2] = color[2];
            image.data[k + 3] = 255;
        }
    }
}

for (const name of triangles.split(' ')) {
    fillTriangle(points[name[0]], points[name[1]], points[name[2]]);
}
ctx.putImageData(image, 0, 0);

// Tip of the vertical axis
ctx.fillStyle = '#0f0';
ctx.fillRect(656, 670, 2, 4);
```
